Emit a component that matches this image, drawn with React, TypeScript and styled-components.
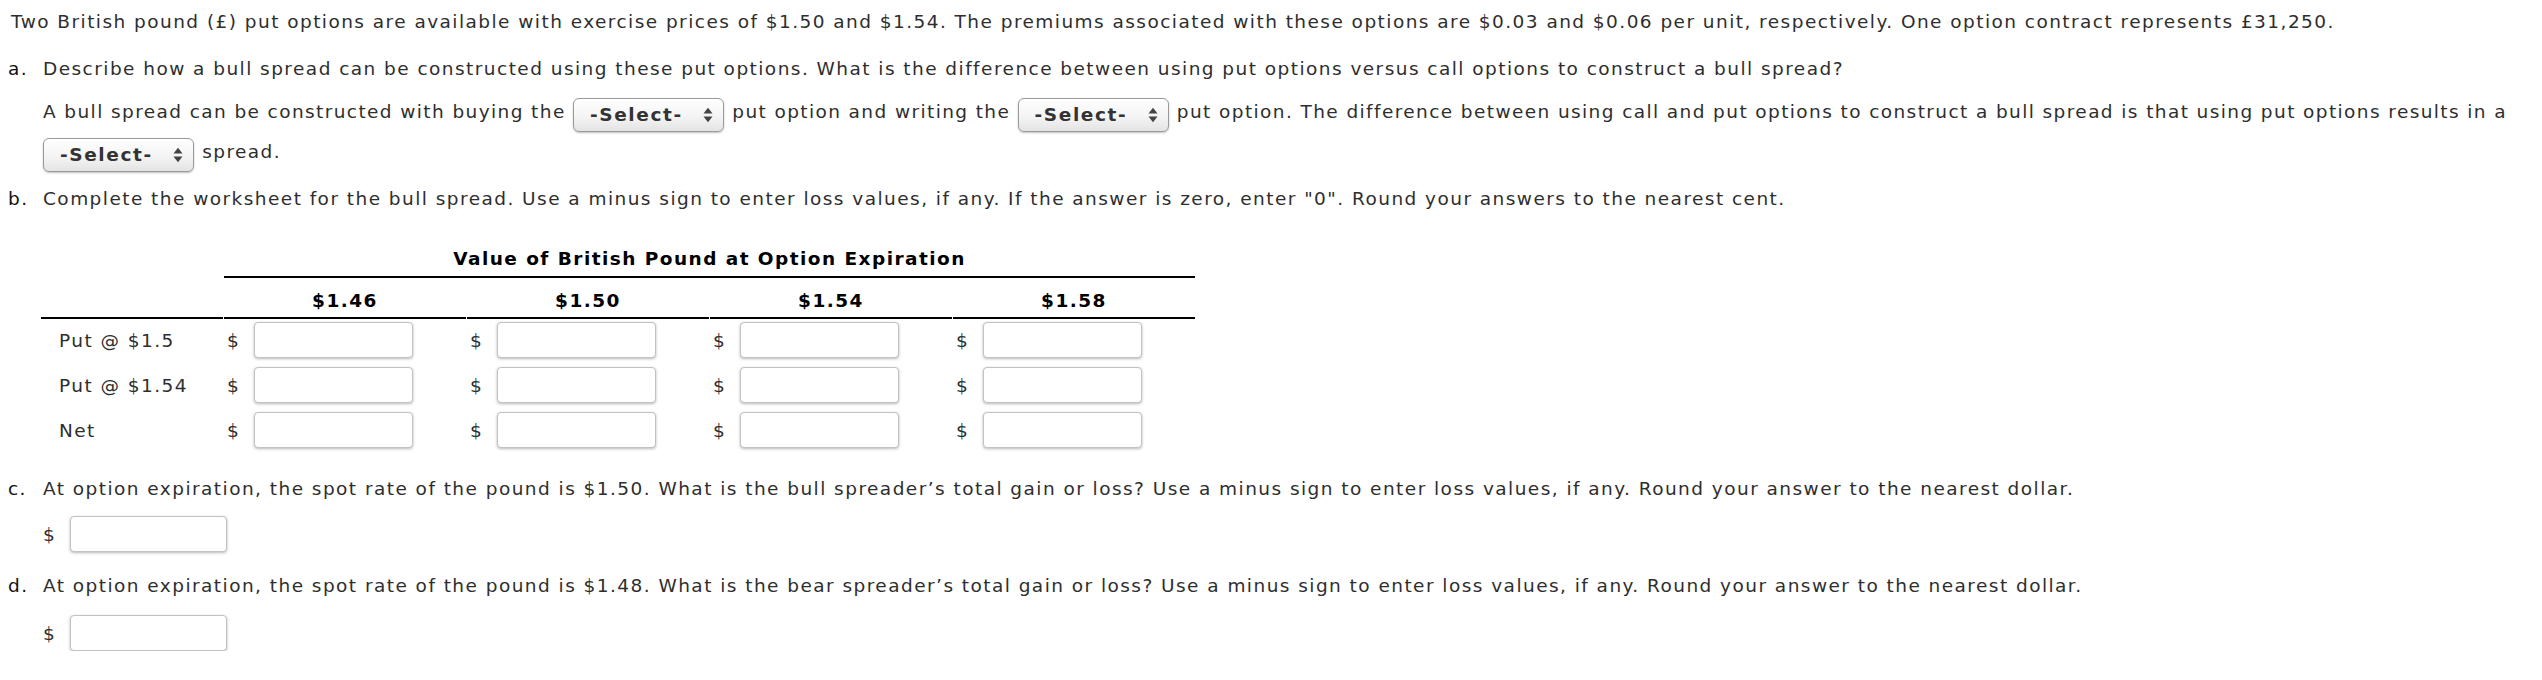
import React from "react";
import styled, { createGlobalStyle } from "styled-components";

const GlobalStyle = createGlobalStyle`
  html, body { background: #ffffff; }
  body {
    margin: 8px;
    font-family: "DejaVu Sans", Verdana, "Noto Sans", sans-serif;
    font-size: 18.5px;
    letter-spacing: 1.45px;
    color: #2e2e2e;
  }
`;

const Page = styled.main`
  display: flex;
  flex-direction: column;
`;

const Intro = styled.p`
  margin: 0;
  padding-left: 3px;
  line-height: 27px;
  white-space: nowrap;
`;

const Part = styled.section<{ $top: number }>`
  display: grid;
  grid-template-columns: 35px 1fr;
  margin-top: ${(p) => p.$top}px;
`;

const PartLabel = styled.span`
  line-height: 27px;
  color: #111111;
`;

const PartBody = styled.div`
  display: flex;
  flex-direction: column;
  min-width: 0;
`;

const Question = styled.p`
  margin: 0;
  line-height: 27px;
  white-space: nowrap;
`;

const Answer = styled.p`
  margin: 10px 0 0;
  line-height: 40px;
  white-space: nowrap;
  letter-spacing: 1.4px;
`;

const SelectBox = styled.span`
  display: inline-flex;
  align-items: center;
  justify-content: space-between;
  box-sizing: border-box;
  width: 151px;
  height: 34px;
  margin: 0 1px 0 0;
  padding: 0 10px 0 16px;
  vertical-align: middle;
  position: relative;
  top: 2px;
  border: 1px solid #9a9a9a;
  border-radius: 6px;
  background: linear-gradient(#ffffff, #f4f4f4 55%, #e4e4e4);
  box-shadow: 0 1px 2px rgba(0, 0, 0, 0.25);
  font-weight: bold;
  letter-spacing: 1.6px;
  color: #333333;
  line-height: 1;
  cursor: default;
`;

const Arrows = styled.svg`
  width: 10px;
  height: 16px;
  flex: none;
`;

const Select = () => (
  <SelectBox role="combobox" aria-label="Select">
    <span>-Select-</span>
    <Arrows viewBox="0 0 10 16" aria-hidden="true">
      <polygon points="0.5,6.5 5,0.8 9.5,6.5" fill="#444" />
      <polygon points="0.5,9.5 9.5,9.5 5,15.2" fill="#444" />
    </Arrows>
  </SelectBox>
);

const Worksheet = styled.table`
  margin: 33px 0 0 -3px;
  border-collapse: separate;
  border-spacing: 1px 0;
  table-layout: fixed;
  width: 1153px;
`;

const LabelCol = styled.col`
  width: 182px;
`;

const DataCol = styled.col`
  width: 242px;
`;

const TitleCell = styled.th`
  padding: 0 0 4px;
  line-height: 27px;
  text-align: center;
  font-weight: bold;
  color: #000000;
  border-bottom: 2px solid #000000;
`;

const EmptyCell = styled.th`
  padding: 0;
`;

const HeadCell = styled.th`
  padding: 9px 0 3px;
  line-height: 27px;
  text-align: center;
  font-weight: bold;
  color: #000000;
  border-bottom: 2px solid #000000;
`;

const RowLabel = styled.td`
  padding: 3px 0 6px 18px;
  line-height: 27px;
  white-space: nowrap;
  vertical-align: middle;
`;

const DataCell = styled.td`
  padding: 3px 0 6px 3px;
  vertical-align: middle;
`;

const Money = styled.div`
  display: flex;
  align-items: center;
  gap: 14px;
`;

const Dollar = styled.span`
  line-height: 27px;
`;

const Field = styled.input<{ $w: number }>`
  box-sizing: border-box;
  width: ${(p) => p.$w}px;
  height: 36px;
  margin: 0;
  padding: 0 8px;
  border: 1px solid #c2c2c2;
  border-radius: 4px;
  background: #ffffff;
  box-shadow: 0 1px 3px rgba(0, 0, 0, 0.28);
  font: inherit;
  outline: none;
`;

const AnswerRow = styled.div<{ $top: number }>`
  margin-top: ${(p) => p.$top}px;
`;

const MoneyField = ({ w }: { w: number }) => (
  <Money>
    <Dollar>$</Dollar>
    <Field type="text" $w={w} aria-label="amount" />
  </Money>
);

const prices = ["$1.46", "$1.50", "$1.54", "$1.58"];
const rows = ["Put @ $1.5", "Put @ $1.54", "Net"];

export default function App() {
  return (
    <>
      <GlobalStyle />
      <Page>
        <Intro>
          Two British pound (£) put options are available with exercise prices of $1.50 and $1.54. The premiums
          associated with these options are $0.03 and $0.06 per unit, respectively. One option contract represents
          £31,250.
        </Intro>

        <Part $top={20}>
          <PartLabel>a.</PartLabel>
          <PartBody>
            <Question>
              Describe how a bull spread can be constructed using these put options. What is the difference between
              using put options versus call options to construct a bull spread?
            </Question>
            <Answer>
              A bull spread can be constructed with buying the <Select /> put option and writing the <Select /> put
              option. The difference between using call and put options to construct a bull spread is that using put
              options results in a
              <br />
              <Select /> spread.
            </Answer>
          </PartBody>
        </Part>

        <Part $top={13}>
          <PartLabel>b.</PartLabel>
          <PartBody>
            <Question>
              Complete the worksheet for the bull spread. Use a minus sign to enter loss values, if any. If the answer
              is zero, enter "0". Round your answers to the nearest cent.
            </Question>
            <Worksheet>
              <colgroup>
                <LabelCol />
                <DataCol />
                <DataCol />
                <DataCol />
                <DataCol />
              </colgroup>
              <thead>
                <tr>
                  <EmptyCell />
                  <TitleCell colSpan={4}>Value of British Pound at Option Expiration</TitleCell>
                </tr>
                <tr>
                  <HeadCell />
                  {prices.map((p) => (
                    <HeadCell key={p}>{p}</HeadCell>
                  ))}
                </tr>
              </thead>
              <tbody>
                {rows.map((r) => (
                  <tr key={r}>
                    <RowLabel>{r}</RowLabel>
                    {prices.map((p) => (
                      <DataCell key={p}>
                        <MoneyField w={159} />
                      </DataCell>
                    ))}
                  </tr>
                ))}
              </tbody>
            </Worksheet>
          </PartBody>
        </Part>

        <Part $top={21}>
          <PartLabel>c.</PartLabel>
          <PartBody>
            <Question>
              At option expiration, the spot rate of the pound is $1.50. What is the bull spreader’s total gain or
              loss? Use a minus sign to enter loss values, if any. Round your answer to the nearest dollar.
            </Question>
            <AnswerRow $top={14}>
              <MoneyField w={157} />
            </AnswerRow>
          </PartBody>
        </Part>

        <Part $top={20}>
          <PartLabel>d.</PartLabel>
          <PartBody>
            <Question>
              At option expiration, the spot rate of the pound is $1.48. What is the bear spreader’s total gain or
              loss? Use a minus sign to enter loss values, if any. Round your answer to the nearest dollar.
            </Question>
            <AnswerRow $top={16}>
              <MoneyField w={157} />
            </AnswerRow>
          </PartBody>
        </Part>
      </Page>
    </>
  );
}
